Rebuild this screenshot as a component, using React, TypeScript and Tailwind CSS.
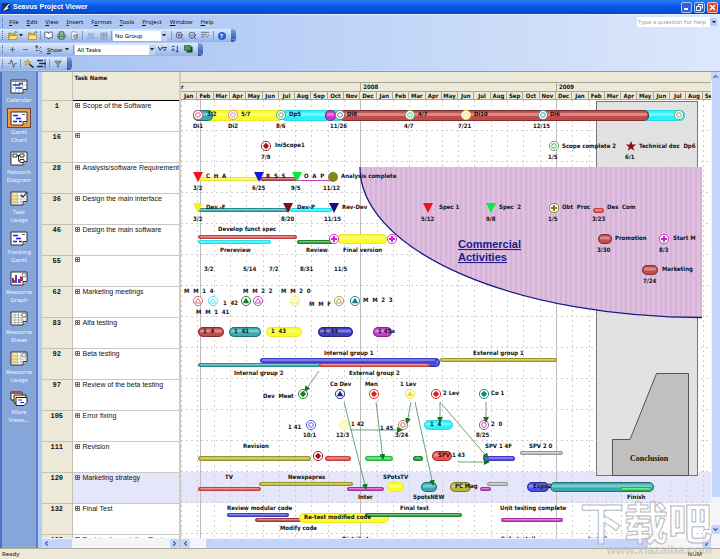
import type { ReactNode } from 'react'
import { Activity, Binoculars, BookOpen, ChevronDown, ChevronLeft, ChevronRight, ChevronUp, Funnel, Minus, Plus, Printer, ZoomIn, ZoomOut } from 'lucide-react'

const MENUS = ['File', 'Edit', 'View', 'Insert', 'Format', 'Tools', 'Project', 'Window', 'Help']

const TASKS: [number, string][] = [
  [1, 'Scope of the Software'],
  [16, ''],
  [28, 'Analysis/software Requirement'],
  [36, 'Design the main interface'],
  [46, 'Design the main software'],
  [55, ''],
  [62, 'Marketing meetings'],
  [83, 'Alfa testing'],
  [92, 'Beta testing'],
  [97, 'Review of the beta testing'],
  [105, 'Error fixing'],
  [111, 'Revision'],
  [120, 'Marketing strategy'],
  [132, 'Final Test'],
  [138, 'Post-implementation Review'],
]

const YEAR = ['Jan', 'Feb', 'Mar', 'Apr', 'May', 'Jun', 'Jul', 'Aug', 'Sep', 'Oct', 'Nov', 'Dec']
const MONTHS = [...YEAR, ...YEAR, ...YEAR.slice(0, 9)]

const C = {
  red: '#ee5252',
  brick: '#c04c4c',
  teal: '#36acb0',
  yellow: '#fcfc2c',
  cyan: '#2cf0fa',
  green: '#2aa336',
  lime: '#30dc58',
  olive: '#bcb83c',
  blue: '#4c4cec',
  navy: '#3c3cc0',
  magenta: '#c83cc8',
  grey: '#bcbcbc',
}
type Color = keyof typeof C

// [x1, x2, top, height, color]
const BARS: [number, number, number, number, Color][] = [
  [281, 345, 110, 11, 'cyan'],
  [205, 283, 110, 11, 'yellow'],
  [193, 213, 110, 11, 'teal'],
  [325, 336, 110, 11, 'magenta'],
  [640, 685, 110, 11, 'cyan'],
  [339, 649, 110, 11, 'brick'],
  [198, 258, 177, 4, 'yellow'],
  [260, 297, 177, 4, 'brick'],
  [297, 332, 180, 1, 'magenta'],
  [198, 290, 208, 4, 'teal'],
  [290, 332, 208, 4, 'cyan'],
  [593, 604, 208, 5, 'red'],
  [198, 297, 235, 4, 'red'],
  [198, 271, 240, 4, 'cyan'],
  [297, 333, 240, 4, 'green'],
  [337, 387, 234, 10, 'yellow'],
  [598, 612, 234, 10, 'brick'],
  [642, 658, 265, 10, 'brick'],
  [198, 224, 327, 10, 'brick'],
  [229, 261, 327, 10, 'teal'],
  [266, 302, 327, 10, 'yellow'],
  [318, 353, 327, 10, 'navy'],
  [373, 392, 327, 10, 'magenta'],
  [415, 440, 358, 9, 'blue'],
  [260, 437, 358, 5, 'blue'],
  [198, 321, 363, 4, 'teal'],
  [319, 430, 363, 4, 'red'],
  [440, 557, 358, 4, 'olive'],
  [424, 453, 420, 10, 'cyan'],
  [198, 311, 456, 5, 'olive'],
  [325, 351, 456, 5, 'red'],
  [365, 393, 456, 5, 'lime'],
  [413, 423, 456, 5, 'green'],
  [432, 452, 451, 10, 'red'],
  [483, 515, 456, 5, 'blue'],
  [520, 563, 451, 4, 'grey'],
  [198, 261, 487, 4, 'red'],
  [259, 353, 482, 4, 'olive'],
  [347, 384, 487, 4, 'magenta'],
  [387, 404, 482, 10, 'yellow'],
  [421, 437, 482, 10, 'teal'],
  [450, 471, 482, 10, 'olive'],
  [480, 491, 487, 4, 'magenta'],
  [487, 508, 482, 4, 'grey'],
  [527, 549, 482, 10, 'blue'],
  [550, 654, 482, 10, 'teal'],
  [620, 652, 487, 4, 'lime'],
  [227, 289, 513, 4, 'blue'],
  [255, 305, 518, 4, 'brick'],
  [299, 389, 513, 10, 'yellow'],
  [365, 462, 513, 4, 'green'],
  [501, 563, 518, 4, 'magenta'],
]

type Shape = 'ring' | 'dot' | 'plus' | 'tri' | 'triFill'

// [cx, cy, color, inner shape]
const MARKS: [number, number, string, Shape][] = [
  [198, 115, '#d04878', 'ring'],
  [233, 115, '#e88080', 'ring'],
  [281, 115, '#50a060', 'ring'],
  [340, 115, '#707070', 'ring'],
  [410, 115, '#50b860', 'ring'],
  [466, 115, '#e8d840', 'ring'],
  [543, 115, '#3090a0', 'ring'],
  [679, 115, '#58a868', 'ring'],
  [266, 146, '#a01818', 'dot'],
  [554, 146, '#48a058', 'ring'],
  [554, 208, '#808018', 'plus'],
  [334, 239, '#d020d0', 'plus'],
  [392, 239, '#d020d0', 'plus'],
  [664, 239, '#d020d0', 'plus'],
  [198, 301, '#e06060', 'tri'],
  [213, 301, '#50e0e8', 'tri'],
  [246, 301, '#187828', 'triFill'],
  [258, 301, '#c040b0', 'tri'],
  [295, 301, '#ecec40', 'tri'],
  [339, 301, '#a0a040', 'tri'],
  [355, 301, '#108080', 'triFill'],
  [303, 394, '#108020', 'dot'],
  [340, 394, '#202088', 'triFill'],
  [374, 394, '#e02020', 'dot'],
  [410, 394, '#e8e020', 'triFill'],
  [436, 394, '#e01818', 'dot'],
  [484, 394, '#108080', 'dot'],
  [311, 425, '#4848d8', 'ring'],
  [344, 425, '#f0f060', 'ring'],
  [403, 425, '#b07040', 'ring'],
  [484, 425, '#a04898', 'ring'],
  [318, 456, '#981010', 'dot'],
]

const FLAGS: [number, number, string][] = [
  [198, 172, '#ee1020'],
  [259, 172, '#1414e0'],
  [297, 172, '#10e838'],
  [198, 203, '#f8f010'],
  [288, 203, '#801010'],
  [334, 203, '#101080'],
  [428, 203, '#ee1020'],
  [491, 203, '#10e838'],
]

// [x, baseline, text]
const LABELS: [number, number, string][] = [
  [207, 116, '3/2'], [241, 116, '5/7'], [289, 116, 'Dp5'], [347, 116, 'Di8'],
  [418, 116, '4/7'], [474, 116, 'Di10'], [550, 116, 'Di6'],
  [193, 128, 'Di1'], [228, 128, 'Di2'], [276, 128, '8/6'], [330, 128, '11/26'],
  [404, 128, '4/7'], [458, 128, '7/21'], [533, 128, '12/15'],
  [275, 147, 'IniScope1'], [261, 159, '7/9'], [562, 148, 'Scope complete 2'],
  [548, 159, '1/5'], [639, 148, 'Technical doc  Dp6'], [625, 159, '6/1'],
  [206, 178, 'C  H  A'], [266, 178, 'R  S  S'], [304, 178, 'O  A  P'], [341, 178, 'Analysis complete'],
  [193, 190, '3/2'], [252, 190, '6/25'], [291, 190, '9/5'], [323, 190, '11/12'],
  [206, 209, 'Dev -F'], [297, 209, 'Dev-P'], [342, 209, 'Rev-Dev'],
  [439, 209, 'Spec 1'], [499, 209, 'Spec  2'], [562, 209, 'Obt  Proc'], [607, 209, 'Des  Com'],
  [193, 221, '3/2'], [281, 221, '8/20'], [324, 221, '11/15'],
  [421, 221, '5/12'], [486, 221, '9/8'], [548, 221, '1/5'], [592, 221, '3/23'],
  [218, 231, 'Develop funct spec'], [220, 252, 'Prereview'], [306, 252, 'Review'], [343, 252, 'Final version'],
  [615, 240, 'Promotion'], [597, 252, '3/30'], [673, 240, 'Start M'], [659, 252, '8/3'],
  [204, 271, '3/2'], [243, 271, '5/14'], [269, 271, '7/2'], [300, 271, '8/31'], [334, 271, '11/5'],
  [662, 271, 'Marketing'], [643, 283, '7/24'],
  [184, 293, 'M  M  1  4'], [243, 293, 'M  M  2  2'], [281, 293, 'M  M  2  0'],
  [223, 305, '1  42'], [309, 306, 'M  M  F'], [363, 302, 'M  M  2  3'], [196, 314, 'M  M  1  41'],
  [203, 333, '1  4'], [234, 333, '1  41'], [271, 333, '1  43'], [323, 333, '1  44'], [378, 333, '1 45a'],
  [324, 355, 'Internal group 1'], [234, 375, 'Internal group 2'], [349, 375, 'External group 2'], [473, 355, 'External group 1'],
  [263, 398, 'Dev  Meet'], [330, 386, 'Co Dev'], [365, 386, 'Men'], [400, 386, '1 Lev'], [443, 395, '2 Lev'], [491, 395, 'Co 1'],
  [288, 429, '1 41'], [303, 437, '10/1'], [351, 426, '1 42'], [336, 437, '12/3'], [380, 430, '1 45'],
  [395, 437, '3/24'], [430, 426, '1  4'], [491, 426, '2  0'], [476, 437, '8/25'],
  [243, 448, 'Revision'], [438, 457, 'SPV 1 43'], [485, 448, 'SPV 1 4F'], [529, 448, 'SPV 2 0'],
  [225, 479, 'TV'], [288, 479, 'Newspapres'], [358, 499, 'Inter'], [383, 479, 'SPotsTV'], [413, 499, 'SpotsNEW'],
  [455, 488, 'PC Mag'], [533, 488, 'Expo2'], [627, 499, 'Finish'],
  [227, 510, 'Review modular code'], [304, 519, 'Re-test modified code'], [400, 510, 'Final test'],
  [280, 530, 'Modify code'], [500, 510, 'Unit testing complete'],
  [342, 541, 'Distribute'], [501, 541, 'Safe Install'], [588, 541, 'Install'],
]

const LINKS: [number, number, number, number][] = [
  [319, 371, 305, 391],
  [344, 402, 366, 489],
  [376, 402, 383, 459],
  [411, 402, 407, 423],
  [415, 402, 433, 485],
  [440, 402, 440, 422],
  [440, 402, 488, 458],
  [486, 402, 486, 422],
  [350, 430, 402, 430],
  [458, 462, 489, 462],
]

function Bar({ x1, x2, y, h, color }: { x1: number; x2: number; y: number; h: number; color: Color }) {
  if (h === 1) return <path d={`M${x1} ${y + 0.5}H${x2}`} stroke={C[color]} />
  const r = Math.min(h / 2, 5)
  const edge = color === 'yellow' || color === 'cyan' ? 0.08 : h < 6 ? 0.2 : 0.35
  return (
    <g>
      <rect x={x1} y={y} width={x2 - x1} height={h} rx={r} fill={C[color]} />
      <rect x={x1 + 2} y={y + h * 0.25} width={x2 - x1 - 4} height={h * 0.3} rx="1" fill="#fff" opacity="0.35" />
      <rect x={x1 + 0.5} y={y + 0.5} width={x2 - x1 - 1} height={h - 1} rx={r - 0.5} fill="none" stroke="#000" strokeOpacity={edge} />
    </g>
  )
}

function Mark({ x, y, color, shape }: { x: number; y: number; color: string; shape: Shape }) {
  return (
    <g transform={`translate(${x} ${y})`}>
      <circle r="4.6" fill="#fff" stroke={color} strokeWidth="0.9" />
      {shape === 'ring' && <circle r="2.3" fill="none" stroke={color} strokeWidth="0.9" />}
      {shape === 'dot' && <path d="M0-3.2 3.2 0 0 3.2-3.2 0z" fill={color} />}
      {shape === 'plus' && <path d="M-1-3H1V-1H3V1H1V3H-1V1H-3V-1H-1z" fill={color} />}
      {shape === 'tri' && <path d="M0-2.8 3 2H-3z" fill="none" stroke={color} strokeWidth="0.9" />}
      {shape === 'triFill' && <path d="M0-3.2 3.4 2.2H-3.4z" fill={color} />}
    </g>
  )
}

function GanttChart() {
  return (
    <svg viewBox="181 100 538 440" className="block h-[440px] w-[538px] shrink-0" role="img" aria-label="Gantt chart">
      <defs>
        <pattern id="hatch" width="2" height="2" patternUnits="userSpaceOnUse">
          <rect width="2" height="2" fill="#e9e9e9" />
          <path d="M0 0h1v1H0zM1 1h1v1H1z" fill="#dadada" />
        </pattern>
        <pattern id="stripes" width="5" height="2" patternUnits="userSpaceOnUse">
          <rect width="5" height="2" fill="#dfbfdf" />
          <rect width="2" height="2" fill="#d5b2d6" />
        </pattern>
        <marker id="arrow" viewBox="0 0 6 6" refX="5" refY="3" markerWidth="6" markerHeight="6" orient="auto" markerUnits="userSpaceOnUse">
          <path d="M0 0 6 3 0 6z" fill="#107820" />
        </marker>
      </defs>

      <rect x="181" y="100" width="538" height="440" fill="#fff" />
      <rect x="181" y="472" width="538" height="31" fill="#e6e6fa" />

      {/* month and row grid */}
      {MONTHS.map((_, i) => (
        <path
          key={i}
          d={`M${Math.round(181 + (i * 538) / 33) + 0.5} 100V540`}
          stroke={i === 11 || i === 23 ? '#bcbcbc' : '#d0d0d0'}
          strokeDasharray={i === 11 || i === 23 ? undefined : '2 3'}
        />
      ))}
      {TASKS.map(([id], i) => (
        <path key={id} d={`M181 ${130.5 + i * 31}H719`} stroke="#d0d0d0" strokeDasharray="2 3" />
      ))}
      <path d="M200.5 100V540" stroke="#bcbcbc" />

      <rect x="596.5" y="101.5" width="101" height="374" fill="url(#hatch)" stroke="#777" />
      <path d="M656.5 373.5H688.5V475.5H612.5V439.5H630z" fill="#c0c0c0" stroke="#555" />
      <path d="M360 167H702V317.5A342 150 0 0 1 360 167z" fill="url(#stripes)" />
      <path d="M702 317.5A342 150 0 0 1 360 167" fill="none" stroke="#181888" strokeWidth="1.3" />

      {BARS.map(([x1, x2, y, h, color]) => (
        <Bar key={`${x1}-${y}`} x1={x1} x2={x2} y={y} h={h} color={color} />
      ))}
      {MARKS.map(([x, y, color, shape]) => (
        <Mark key={`${x}-${y}`} x={x} y={y} color={color} shape={shape} />
      ))}
      {FLAGS.map(([x, y, color]) => (
        <path key={`${x}-${y}`} d={`M${x - 5} ${y}h10l-5 10z`} fill={color} />
      ))}
      <circle cx="333" cy="177" r="5" fill="#85851c" />
      <path d="M631 141l1.300 3.500h3.900l-3.100 2.400 1.200 3.900-3.300-2.300-3.300 2.300 1.200-3.900-3.100-2.400h3.900z" fill="#901010" />

      {LINKS.map(([x1, y1, x2, y2]) => (
        <line key={`${x1}-${x2}-${y2}`} x1={x1} y1={y1} x2={x2} y2={y2} stroke="#4c8c5c" strokeWidth="0.8" markerEnd="url(#arrow)" />
      ))}

      <g className="font-['DejaVu_Sans_Condensed','DejaVu_Sans',sans-serif] text-[6px] font-bold" fill="#111">
        {LABELS.map(([x, y, text]) => (
          <text key={`${x}-${y}`} x={x} y={y} className="whitespace-pre">{text}</text>
        ))}
      </g>
      <g className="font-['Liberation_Sans',sans-serif] text-[11px] font-bold underline" fill="#202088">
        <text x="458" y="248">Commercial</text>
        <text x="458" y="261">Activities</text>
      </g>
      <text x="630" y="461" className="font-['Liberation_Serif',serif] text-[8px] font-bold" fill="#111">Conclusion</text>
    </svg>
  )
}

function Toolbar({ label, children }: { label: string; children: ReactNode }) {
  return (
    <div role="toolbar" aria-label={label} className="flex h-[13px] items-center self-start rounded-r-sm bg-linear-to-b from-[#dfeafd] to-[#94b3e8] pl-[2px]">
      <span className="mr-[3px] h-[9px] border-l border-dotted border-[#4068b0]" />
      {children}
      <span className="ml-[3px] flex h-[13px] w-[5px] items-end rounded-r-sm bg-linear-to-b from-[#7ba0e0] to-[#2a4ca0] text-white">
        <ChevronDown size={5} />
      </span>
    </div>
  )
}

function Tool({ label, children }: { label: string; children: ReactNode }) {
  return (
    <button type="button" aria-label={label} className="flex h-[12px] w-[13px] items-center justify-center text-[#33404f]">
      {children}
    </button>
  )
}

function Sep() {
  return <span className="mx-[1px] h-[9px] w-px bg-[#7898d0]" />
}

function Caret() {
  return <svg viewBox="0 0 5 3" className="w-[4px] shrink-0"><path d="M0 0H5L2.500 3z" fill="#222" /></svg>
}

function Folder({ up }: { up?: boolean }) {
  return (
    <svg viewBox="0 0 10 9" className="w-[10px]">
      <path d="M0.500 2h3l1 1h3.500v5.500h-7.500z" fill="#e0aa38" stroke="#8a6a20" strokeWidth="0.5" />
      <path d={up ? 'M0.500 4h8v4.500h-8z' : 'M2 4.500h8l-2 4h-7.500z'} fill="#ffe080" stroke="#9a7a20" strokeWidth="0.5" />
      <path d="M6 2.200 8 0.400 9.500 2.200" fill="none" stroke="#2a8a30" strokeWidth="1" />
    </svg>
  )
}

function Picker({ label, value, className }: { label: string; value: string; className: string }) {
  return (
    <span className={`relative flex h-[10px] items-center bg-white ${className}`}>
      <select aria-label={label} className="h-full w-full appearance-none pl-[2px] leading-[8px] text-black">
        <option>{value}</option>
      </select>
      <span className="pointer-events-none absolute inset-y-0 right-0 flex w-[6px] items-center justify-center bg-[#bdd2f6]">
        <Caret />
      </span>
    </span>
  )
}

function Toolbars() {
  return (
    <div className="flex flex-col gap-px pb-px">
      <Toolbar label="Standard">
        <Tool label="Open"><Folder /></Tool>
        <Caret />
        <span className="w-[3px]" />
        <Tool label="Open from server"><Folder up /></Tool>
        <Sep />
        <Tool label="Project information"><BookOpen size={9} fill="#fff" /></Tool>
        <Tool label="Print"><Printer size={9} fill="#9bc88a" /></Tool>
        <Tool label="Print preview">
          <svg viewBox="0 0 10 10" className="w-[9px]">
            <path d="M2 1h4l2 2v6H2z" fill="#fff" stroke="#667" strokeWidth="0.6" />
            <circle cx="6" cy="6" r="2" fill="#bcd" stroke="#334" strokeWidth="0.7" />
          </svg>
        </Tool>
        <Sep />
        <Tool label="Link tasks"><Binoculars size={8} color="#93a3bd" /></Tool>
        <Tool label="Notes">
          <svg viewBox="0 0 9 9" className="w-[8px]"><path d="M1 1h7v7H1zM1 3.500h7M4 1v7" fill="#a8b8d0" stroke="#8494b0" strokeWidth="0.7" /></svg>
        </Tool>
        <Sep />
        <Picker label="Group by" value="No Group" className="w-[54px]" />
        <span className="w-[3px]" />
        <Sep />
        <Tool label="Zoom in"><ZoomIn size={9} /></Tool>
        <Tool label="Zoom out"><ZoomOut size={9} /></Tool>
        <Tool label="Go to task">
          <svg viewBox="0 0 10 9" className="w-[9px]"><path d="M0 1.500h9M0 4h6M0 6.500h4M6 7l3-3" stroke="#7d8798" strokeWidth="1.200" /></svg>
        </Tool>
        <Sep />
        <Tool label="Help">
          <span className="flex size-[8px] items-center justify-center rounded-full bg-[#2864d0] text-[6px] leading-[8px] font-bold text-white">?</span>
        </Tool>
      </Toolbar>

      <Toolbar label="Outline">
        <Tool label="Show subtasks"><Plus size={7} strokeWidth={4} color="#5c6f94" /></Tool>
        <Tool label="Hide subtasks"><Minus size={7} strokeWidth={4} color="#5c6f94" /></Tool>
        <Tool label="Hide assignments">
          <svg viewBox="0 0 10 9" className="w-[9px]"><path d="M1 2h4M3 0v4M2 6h3M6 4l2-2M6 6l3 2.500" stroke="#445" strokeWidth="1" /></svg>
        </Tool>
        <button type="button" className="flex items-center gap-[3px] pr-[3px] pl-[2px]">
          <span><u>S</u>how</span>
          <Caret />
        </button>
        <Sep />
        <Picker label="Filter" value="All Tasks" className="w-[80px]" />
        <span className="w-[1px]" />
        <Tool label="AutoFilter">
          <svg viewBox="0 0 10 9" className="w-[9px]"><path d="M0 2l2.500 4L5 2M5 3h5M6 5.500h3" fill="none" stroke="#223" strokeWidth="1.100" /></svg>
        </Tool>
        <Tool label="Sort">
          <svg viewBox="0 0 10 9" className="w-[9px]"><path d="M1 7l1.500-3L4 7M7 1v7M5.500 6.500 7 8l1.500-1.500M1 1.500h3" fill="none" stroke="#223a80" strokeWidth="1" /></svg>
        </Tool>
        <Tool label="Export">
          <svg viewBox="0 0 10 9" className="w-[9px]"><path d="M3 2h6.500v6.500H3z" fill="#28482c" /><path d="M0.500 0.500h7V6h-7z" fill="#4a9c50" stroke="#1c5424" strokeWidth="0.7" /></svg>
        </Tool>
      </Toolbar>

      <Toolbar label="Analysis">
        <Tool label="Progress line"><Activity size={9} /></Tool>
        <Sep />
        <Tool label="Wizard">
          <svg viewBox="0 0 10 9" className="w-[10px]"><path d="M4 4 9.500 8.500" stroke="#223" strokeWidth="1.600" /><path d="M3.500 0l1 2.500H7L5 4l1 2.500-2.500-1.500L1 6.500 2 4 0 2.500h2.500z" fill="#f0b830" stroke="#a07818" strokeWidth="0.4" /></svg>
        </Tool>
        <Tool label="Baseline">
          <svg viewBox="0 0 10 9" className="w-[10px]"><path d="M0 1.500h6M2 4.500h7M0 7.500h6" stroke="#1c2c58" strokeWidth="1.500" /><path d="M8 0v9" stroke="#1c2c58" strokeWidth="0.8" /></svg>
        </Tool>
        <Sep />
        <Tool label="Filter"><Funnel size={8} fill="#7c9a88" color="#5c7468" /></Tool>
      </Toolbar>
    </div>
  )
}

type ViewKind = 'calendar' | 'gantt' | 'network' | 'task' | 'graph' | 'sheet' | 'usage' | 'more'

const VIEWS: { name: string[]; kind: ViewKind; active?: boolean }[] = [
  { name: ['Calendar'], kind: 'calendar' },
  { name: ['Gantt', 'Chart'], kind: 'gantt', active: true },
  { name: ['Network', 'Diagram'], kind: 'network' },
  { name: ['Task', 'Usage'], kind: 'task' },
  { name: ['Tracking', 'Gantt'], kind: 'gantt' },
  { name: ['Resource', 'Graph'], kind: 'graph' },
  { name: ['Resource', 'Sheet'], kind: 'sheet' },
  { name: ['Resource', 'Usage'], kind: 'usage' },
  { name: ['More', 'Views...'], kind: 'more' },
]

function ViewIcon({ kind }: { kind: ViewKind }) {
  if (kind === 'more') {
    return (
      <svg viewBox="0 0 18 15" className="w-[18px]">
        <path d="M1 1h11v8H1z" fill="#fff" stroke="#222" />
        <path d="M1 1h11v2H1z" fill="#b05040" />
        <path d="M4 4h12v8H4z" fill="#ffe9a0" stroke="#222" />
        <path d="M6 6.500h11v5l-3 3H6z" fill="#fff" stroke="#222" />
        <path d="M8 9h4M10 11.500h4" stroke="#2030d0" />
      </svg>
    )
  }
  return (
    <svg viewBox="0 0 18 15" className="w-[18px]">
      <path d="M1 1h16v9.500L13 14H1z" fill="#fff" stroke="#333" />
      <path d="M17 10.500h-4V14" fill="#cfd4e0" stroke="#333" />
      {kind === 'calendar' && (
        <g>
          <path d="M1.500 1.500h15v1.500h-15z" fill="#8890a8" />
          <path d="M2 6h14M2 9h12M5.500 3v10M9 3v10M12.500 3v8" stroke="#b8bccc" />
          <path d="M3 6h7M6 9h6M9 4.500h4" stroke="#2838c8" strokeWidth="1.500" />
        </g>
      )}
      {kind === 'gantt' && (
        <g>
          <path d="M12 3.500h3" stroke="#666" />
          <path d="M3 4.500h5M6 7.500h5M3 10.500h4M9 10.500h3" stroke="#2020d0" strokeWidth="1.500" />
        </g>
      )}
      {kind === 'network' && (
        <g fill="#fff" stroke="#333">
          <path d="M3 3h4v3H3zM10 3h4v3h-4zM10 8.500h4v3h-4zM7 4.500h3M8.500 4.500V10H10" />
        </g>
      )}
      {(kind === 'task' || kind === 'usage') && (
        <g>
          <path d="M2 2h5v11H2z" fill="#f8e48c" />
          <path d="M7.500 2v11M11 2v11M2 5h14M2 8h14M2 11h10" stroke="#aaa" strokeWidth="0.7" />
          {kind === 'task' ? <path d="M11 4l2 2 4-5" fill="none" stroke="#223" strokeWidth="1.200" /> : <circle cx="14" cy="4" r="2" fill="#f8f8ff" stroke="#555" strokeWidth="0.7" />}
        </g>
      )}
      {kind === 'graph' && (
        <g>
          <path d="M3 12V7M6 12V4M9 12V8M12 10V6" stroke="#2424c8" strokeWidth="1.700" />
          <path d="M4.500 12V9M10.500 12V5" stroke="#d83030" strokeWidth="1.200" />
          <circle cx="14" cy="4" r="2" fill="#fff" stroke="#555" strokeWidth="0.7" />
        </g>
      )}
      {kind === 'sheet' && (
        <g>
          <path d="M2 4h14M2 6.500h14M2 9h13M2 11.500h10M5 2v12M8.500 2v12M12 2v10" stroke="#999" strokeWidth="0.7" />
          <circle cx="14" cy="4" r="2" fill="#fff" stroke="#555" strokeWidth="0.7" />
        </g>
      )}
    </svg>
  )
}

function ViewBar() {
  return (
    <nav aria-label="Views" className="flex w-[36px] shrink-0 flex-col gap-[4px] overflow-hidden border-l-2 border-[#4a72c4] bg-[#86a6da] pt-[4px]">
      {VIEWS.map(({ name, kind, active }) => (
        <button key={name.join()} type="button" className="flex flex-col items-center leading-[8px] text-[#eef4ff]">
          <span className={`flex h-[20px] w-[24px] items-center justify-center ${active ? 'border border-[#5a4a50] bg-[#f09a48]' : ''}`}>
            <ViewIcon kind={kind} />
          </span>
          {name.map((line) => <span key={line}>{line}</span>)}
        </button>
      ))}
    </nav>
  )
}

function ScrollButton({ label, children }: { label: string; children: ReactNode }) {
  return (
    <button type="button" aria-label={label} className="flex size-[9px] shrink-0 items-center justify-center rounded-xs bg-[#c3d5fc] text-[#3c5890]">
      {children}
    </button>
  )
}

function TaskTable() {
  return (
    <section className="flex w-[137px] shrink-0 flex-col bg-white">
      <div className="min-h-0 flex-1 overflow-hidden">
        <table className="w-full table-fixed border-collapse font-['Liberation_Sans',sans-serif] text-[7px] leading-[8px]">
          <thead>
            <tr className="h-[28px] bg-[#ece9d8] text-left align-top">
              <th aria-label="ID" className="w-[30px] border-r border-b border-[#c4c0b0] p-0" />
              <th className="border-b border-black py-[2px] pl-[2px] text-[6px] font-['DejaVu_Sans_Condensed','DejaVu_Sans',sans-serif]">Task Name</th>
            </tr>
          </thead>
          <tbody>
            {TASKS.map(([id, name]) => (
              <tr key={id} className={`h-[31px] align-top ${id === 120 ? 'bg-[#e6e6fa]' : 'bg-white'}`}>
                <th scope="row" className="border-r border-b border-[#c4c0b0] bg-[#ece9d8] p-0 pt-[1px] text-center font-['Liberation_Mono',monospace] font-bold">{id}</th>
                <td className="border-b border-[#c8c8c8] p-0 pt-[1px] pl-[2px]">
                  <div className="flex items-center gap-[3px] overflow-hidden whitespace-nowrap">
                    <button type="button" aria-label="Expand" className="shrink-0">
                      <svg viewBox="0 0 5 5" className="w-[5px]"><path d="M0.500 0.500h4v4h-4zM1 2.500h3M2.500 1v3" fill="none" stroke="#333" strokeWidth="0.7" /></svg>
                    </button>
                    {name}
                  </div>
                </td>
              </tr>
            ))}
          </tbody>
        </table>
      </div>
      <div className="flex h-[10px] shrink-0 items-center bg-[#f4f5f9]">
        <ScrollButton label="Scroll table left"><ChevronLeft size={7} strokeWidth={4} /></ScrollButton>
        <span className="h-[9px] w-[21px] bg-[#c3d5fc]" />
        <span className="flex-1" />
        <ScrollButton label="Scroll table right"><ChevronRight size={7} strokeWidth={4} /></ScrollButton>
      </div>
    </section>
  )
}

function Timescale() {
  return (
    <div className="h-[28px] w-[538px] shrink-0 bg-[#ece9d8] pt-[10px] font-['DejaVu_Sans_Condensed','DejaVu_Sans',sans-serif] text-[6px] leading-[8px] font-bold">
      <div className="grid grid-cols-33 border-t border-[#aaa694]">
        <span className="col-span-11">r</span>
        <span className="col-span-12 border-l border-[#aaa694] pl-[2px]">2008</span>
        <span className="col-span-10 border-l border-[#aaa694] pl-[2px]">2009</span>
      </div>
      <div className="grid grid-cols-33 border-y border-[#aaa694] text-center">
        {MONTHS.map((month, i) => (
          <span key={i} className="min-w-0 border-r border-[#aaa694] leading-[7px]">{month}</span>
        ))}
      </div>
    </div>
  )
}

function ChartPane() {
  return (
    <section className="flex min-w-0 flex-1 flex-col">
      <div className="flex min-h-0 flex-1 flex-col overflow-hidden bg-white">
        <Timescale />
        <GanttChart />
      </div>
      <div className="flex h-[10px] shrink-0 items-center bg-[#f4f5f9]">
        <ScrollButton label="Scroll chart left"><ChevronLeft size={7} strokeWidth={4} /></ScrollButton>
        <span className="w-[16px]" />
        <span className="h-[9px] w-5/6 bg-[#c3d5fc]" />
        <span className="flex-1" />
        <ScrollButton label="Scroll chart right"><ChevronRight size={7} strokeWidth={4} /></ScrollButton>
      </div>
    </section>
  )
}

export default function App() {
  return (
    <div className="relative flex h-screen flex-col overflow-hidden bg-[#ece9d8] font-['Noto_Sans',sans-serif] text-[6px] leading-[8px] text-[#111]">
      <header className="flex h-[14px] shrink-0 items-center gap-[3px] bg-linear-to-b from-[#2a7cf4] via-[#0656e4] to-[#0448d4] px-[2px]">
        <svg viewBox="0 0 9 9" className="w-[8px]">
          <path d="M0 0h9v9H0z" fill="#183078" />
          <path d="M2 8 8 1 5 5l2 1-5 2z" fill="#fff" stroke="#fff" />
        </svg>
        <h1 className="flex-1 font-['Liberation_Sans',sans-serif] text-[7px] leading-[10px] font-bold text-white">Seavus Project Viewer</h1>
        <div className="flex gap-[2px]">
          <button type="button" aria-label="Minimize" className="flex size-[11px] items-end rounded-xs border border-[#a8c4f8] bg-[#2c60dc] p-[2px]">
            <span className="h-[2px] w-[4px] bg-white" />
          </button>
          <button type="button" aria-label="Restore" className="flex size-[11px] items-center justify-center rounded-xs border border-[#a8c4f8] bg-[#2c60dc]">
            <svg viewBox="0 0 7 7" className="w-[7px]"><path d="M2.500 2V0.500h4v3.500H5M0.500 2.500h4v4h-4z" fill="none" stroke="#fff" /></svg>
          </button>
          <button type="button" aria-label="Close" className="flex size-[11px] items-center justify-center rounded-xs border border-[#f0c0b0] bg-[#dc4c28]">
            <svg viewBox="0 0 7 7" className="w-[7px]"><path d="M1 1l5 5M6 1 1 6" stroke="#fff" strokeWidth="1.500" /></svg>
          </button>
        </div>
      </header>

      <div className="flex shrink-0 flex-col border-t border-b border-t-[#e4eefc] border-b-[#7c9cd4] bg-linear-to-r from-[#a4c0f2] to-[#dce8fb]">
        <div className="flex h-[14px] items-center justify-between pl-[2px]">
          <nav aria-label="Main menu" className="flex items-center">
            <span className="mr-[2px] h-[9px] border-l border-dotted border-[#4068b0]" />
            {MENUS.map((menu) => (
              <button key={menu} type="button" className="px-[4px]">
                {menu === 'Format' ? <>F<u>o</u>rmat</> : <><u>{menu[0]}</u>{menu.slice(1)}</>}
              </button>
            ))}
          </nav>
          <div className="flex items-center pr-[3px]">
            <input aria-label="Help question" placeholder="Type a question for help" className="h-[10px] w-[73px] bg-white px-[1px] placeholder:text-[#a0a0a0]" />
            <button type="button" aria-label="Recent questions" className="flex h-[8px] w-[7px] items-center justify-center bg-[#b4caf4]"><Caret /></button>
          </div>
        </div>
        <Toolbars />
      </div>

      <main className="flex min-h-0 flex-1">
        <ViewBar />
        <div className="w-[6px] shrink-0 border-l-2 border-[#5c80cc] bg-[#b4cdf8]" />
        <TaskTable />
        <div className="w-[2px] shrink-0 bg-[#d0ccbc]" />
        <ChartPane />
        <div className="flex w-[9px] shrink-0 flex-col items-center bg-[#f4f5f9] pb-[14px]">
          <ScrollButton label="Scroll up"><ChevronUp size={7} strokeWidth={4} /></ScrollButton>
          <span className="h-9/10 w-[8px] bg-[#c3d5fc]" />
          <span className="flex-1" />
          <ScrollButton label="Scroll down"><ChevronDown size={7} strokeWidth={4} /></ScrollButton>
        </div>
      </main>

      <footer className="flex h-[11px] shrink-0 items-center justify-between border-t border-[#b0ac9c] bg-[#ece9d8] pr-[18px] pl-[2px]">
        <span>Ready</span>
        <span>NUM</span>
      </footer>

      {/* site mark laid over the bottom corner */}
      <div className="pointer-events-none absolute right-[8px] bottom-[3px] flex flex-col items-end">
        <span className="font-['Noto_Sans_CJK_SC',sans-serif] text-[44px] leading-[48px] font-bold text-white/60 [-webkit-text-stroke:1px_#b8b8b8]">下载吧</span>
        <span className="font-['Liberation_Sans',sans-serif] text-[12px] leading-[11px] font-bold text-[#b8b8b8]/60">www.xiazaiba.com</span>
      </div>
    </div>
  )
}
